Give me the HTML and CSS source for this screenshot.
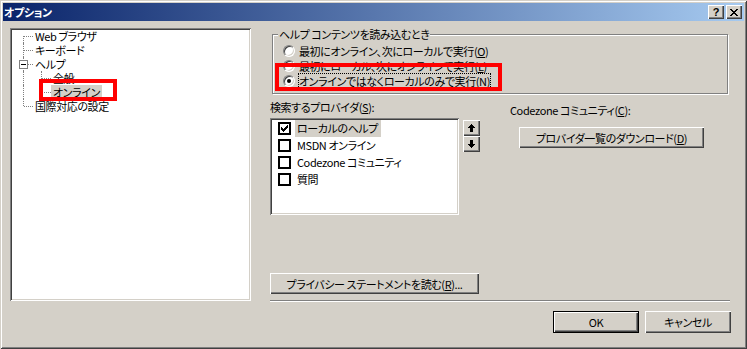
FILE: index.html
```html
<!DOCTYPE html>
<html lang="ja">
<head>
  <meta charset="UTF-8" />
  <title>オプション</title>
  <link rel="stylesheet" href="styles.css">
</head>
<body>
  <div class="window">
    <div class="titlebar">
      <span class="title">オプション</span>
      <div class="caption-buttons">
        <button class="cap-btn help">?</button>
        <button class="cap-btn">
          <svg width="8" height="7" viewBox="0 0 8 7" shape-rendering="crispEdges">
            <path d="M0 0h2v1h1v1h2V1h1V0h2v1H7v1H6v1H5v1h1v1h1v1h1v1H6V6H5V5H3v1H2v1H0V6h1V5h1V4h1V3H2V2H1V1H0z" fill="#000"/>
          </svg>
        </button>
      </div>
    </div>

    <div class="content">
      <div class="tree">
        <div class="node"><span class="cell first"></span><span class="label">Web ブラウザ</span></div>
        <div class="node"><span class="cell tee"></span><span class="label">キーボード</span></div>
        <div class="node"><span class="cell tee"><span class="expander"></span></span><span class="label">ヘルプ</span></div>
        <div class="node"><span class="cell pipe"></span><span class="cell tee"></span><span class="label">全般</span></div>
        <div class="node"><span class="cell pipe"></span><span class="cell last"></span><span class="label selected">オンライン</span></div>
        <div class="node"><span class="cell last"></span><span class="label">国際対応の設定</span></div>
      </div>

      <div class="pane">
        <fieldset class="group">
          <legend>ヘルプ コンテンツを読み込むとき</legend>
          <div class="radio-row"><span class="radio"></span><span class="radio-text">最初にオンライン、次にローカルで実行(<u>O</u>)</span></div>
          <div class="radio-row"><span class="radio"></span><span class="radio-text">最初にローカル、次にオンラインで実行(<u>L</u>)</span></div>
          <div class="radio-row"><span class="radio checked"></span><span class="radio-text focused">オンラインではなくローカルのみで実行(<u>N</u>)</span></div>
        </fieldset>

        <div class="providers">
          <div class="provider-col">
            <div class="field-label">検索するプロバイダ(<u>S</u>):</div>
            <div class="list-row">
              <div class="listbox">
                <div class="item">
                  <span class="check">
                    <svg width="7" height="7" viewBox="0 0 7 7" shape-rendering="crispEdges">
                      <path d="M6 0h1v3H6v1H5v1H4v1H3v1H2V6H1V5H0V2h1v1h1v1h1V3h1V2h1V1h1z" fill="#000"/>
                    </svg>
                  </span>
                  <span class="item-text selected">ローカルのヘルプ</span>
                </div>
                <div class="item"><span class="check"></span><span class="item-text">MSDN オンライン</span></div>
                <div class="item"><span class="check"></span><span class="item-text">Codezone コミュニティ</span></div>
                <div class="item"><span class="check"></span><span class="item-text">質問</span></div>
              </div>
              <div class="updown">
                <button class="btn arrow">
                  <svg width="7" height="8" viewBox="0 0 7 8" shape-rendering="crispEdges">
                    <path d="M3 0h1v1h1v1h1v1h1v1H5v4H2V4H0V3h1V2h1V1h1z" fill="#000"/>
                  </svg>
                </button>
                <button class="btn arrow">
                  <svg width="7" height="8" viewBox="0 0 7 8" shape-rendering="crispEdges">
                    <path d="M2 0h3v4h2v1H6v1H5v1H4v1H3V7H2V6H1V5H0V4h2z" fill="#000"/>
                  </svg>
                </button>
              </div>
            </div>
          </div>

          <div class="codezone">
            <div class="field-label">Codezone コミュニティ(<u>C</u>):</div>
            <button class="btn download">プロバイダ一覧のダウンロード(<u>D</u>)</button>
          </div>
        </div>

        <button class="btn privacy">プライバシー ステートメントを読む(<u>R</u>)...</button>
        <div class="separator"></div>
      </div>
    </div>

    <div class="footer">
      <button class="btn default">OK</button>
      <button class="btn">キャンセル</button>
    </div>

    <div class="mark mark-tree"></div>
    <div class="mark mark-radio"></div>
  </div>
</body>
</html>
```

FILE: styles.css
```css
body {
  margin: 0;
  font-family: "Noto Sans CJK JP", "Liberation Sans", sans-serif;
  font-feature-settings: "palt" 1;
  font-size: 11px;
  letter-spacing: -0.4px;
  line-height: 14px;
  color: #000;
  background: #d4d0c8;
}
button {
  font: inherit;
  letter-spacing: inherit;
  color: #000;
  margin: 0;
  padding: 0;
  border: none;
  background: #d4d0c8;
}
.window {
  position: relative;
  box-sizing: border-box;
  width: 747px;
  height: 349px;
  padding: 3px;
  background: #d4d0c8;
  box-shadow: inset 1px 1px #d4d0c8, inset -1px -1px #404040, inset 2px 2px #fff, inset -2px -2px #808080;
}

/* title bar */
.titlebar {
  display: flex;
  align-items: center;
  justify-content: space-between;
  height: 18px;
  padding: 0 2px 0 1px;
  background: linear-gradient(to right, #0a246a, #a6caf0);
}
.title {
  color: #fff;
  font-weight: bold;
}
.caption-buttons {
  display: flex;
  gap: 2px;
}
.cap-btn {
  display: flex;
  align-items: center;
  justify-content: center;
  width: 16px;
  height: 14px;
  box-shadow: inset 1px 1px #fff, inset -1px -1px #404040, inset -2px -2px #808080;
}
.cap-btn.help {
  font-family: "Liberation Sans", sans-serif;
  font-weight: bold;
  font-size: 11px;
  line-height: 14px;
}

/* main area */
.content {
  display: flex;
  gap: 19px;
  padding: 7px 0 0 7px;
}
.tree {
  box-sizing: border-box;
  width: 241px;
  height: 273px;
  padding: 1px 0 0 5px;
  background: #fff;
  box-shadow: inset 1px 1px #808080, inset -1px -1px #fff, inset 2px 2px #404040, inset -2px -2px #d4d0c8;
}
.node {
  display: flex;
  align-items: center;
  height: 14px;
}
.cell {
  position: relative;
  flex: none;
  width: 18px;
  height: 14px;
}
.cell::before {
  content: "";
  position: absolute;
  left: 8px;
  top: 0;
  bottom: 0;
  border-left: 1px dotted #808080;
}
.cell::after {
  content: "";
  position: absolute;
  left: 9px;
  top: 7px;
  width: 9px;
  border-top: 1px dotted #808080;
}
.cell.first::before { top: 7px; }
.cell.last::before { bottom: 7px; }
.cell.pipe::after { display: none; }
.expander {
  position: absolute;
  z-index: 1;
  left: 4px;
  top: 3px;
  box-sizing: border-box;
  width: 9px;
  height: 9px;
  border: 1px solid #808080;
  background: #fff;
}
.expander::before {
  content: "";
  position: absolute;
  left: 1px;
  top: 3px;
  width: 5px;
  height: 1px;
  background: #000;
}
.label {
  padding: 0 2px 0 2px;
  white-space: nowrap;
}
.label.selected {
  background: #d4d0c8;
}

.pane {
  display: flex;
  flex-direction: column;
  align-items: flex-start;
  width: 460px;
  margin-top: -1px;
}
.group {
  box-sizing: border-box;
  width: 456px;
  margin: 0 0 0 2px;
  padding: 2px 0 5px 5px;
  border: 1px solid #808080;
  box-shadow: 1px 1px #fff, inset 1px 1px #fff;
  min-width: 0;
}
.group legend {
  padding: 0 1px;
  background: #d4d0c8;
}
.radio-row {
  display: flex;
  align-items: center;
  gap: 4px;
  height: 15px;
  margin-left: 5px;
}
.radio {
  position: relative;
  box-sizing: border-box;
  width: 12px;
  height: 12px;
  border-radius: 50%;
  background: #fff;
  border: 1px solid;
  border-color: #808080 #fff #fff #808080;
  box-shadow: inset 1px 1px #404040, inset -1px -1px #d4d0c8;
}
.radio.checked::after {
  content: "";
  position: absolute;
  left: 3px;
  top: 3px;
  width: 4px;
  height: 4px;
  border-radius: 50%;
  background: #000;
}
.radio-text.focused {
  outline: 1px dotted #000;
  outline-offset: 0;
}

.providers {
  display: flex;
  margin-top: 6px;
}
.field-label {
  white-space: nowrap;
}
.provider-col .field-label {
  margin-bottom: 4px;
}
.list-row {
  display: flex;
  align-items: flex-start;
}
.listbox {
  box-sizing: border-box;
  width: 189px;
  height: 97px;
  padding: 2px 0 0 8px;
  background: #fff;
  box-shadow: inset 1px 1px #808080, inset -1px -1px #fff, inset 2px 2px #404040, inset -2px -2px #d4d0c8;
}
.item {
  display: flex;
  align-items: center;
  gap: 4px;
  height: 17px;
}
.check {
  display: flex;
  align-items: center;
  justify-content: center;
  box-sizing: border-box;
  width: 13px;
  height: 13px;
  border: 2px solid #000;
  background: #fff;
}
.item-text {
  padding: 1px 3px 2px 2px;
  white-space: nowrap;
}
.item-text.selected {
  background: #d4d0c8;
}
.updown {
  display: flex;
  flex-direction: column;
  margin: 2px 0 0 4px;
}
.btn {
  display: flex;
  align-items: center;
  justify-content: center;
  box-sizing: border-box;
  white-space: nowrap;
  box-shadow: inset 1px 1px #fff, inset -1px -1px #404040, inset -2px -2px #808080;
}
.btn.arrow {
  width: 17px;
  height: 16px;
}
.codezone {
  display: flex;
  flex-direction: column;
  align-items: flex-start;
  margin: 3px 0 0 30px;
}
.btn.download {
  width: 185px;
  height: 21px;
  margin: 10px 0 0 9px;
}
.btn.privacy {
  width: 209px;
  height: 21px;
  margin-top: 58px;
}
.separator {
  width: 460px;
  margin-top: 6px;
  border-top: 1px solid #808080;
  border-bottom: 1px solid #fff;
}

.footer {
  display: flex;
  justify-content: flex-end;
  gap: 6px;
  margin-top: 9px;
  padding-right: 13px;
}
.footer .btn {
  width: 86px;
  height: 22px;
}
.btn.default {
  border: 1px solid #000;
}

/* red annotation frames */
.mark {
  position: absolute;
  box-sizing: border-box;
  border: 4px solid #f00;
}
.mark-tree {
  left: 39px;
  top: 79px;
  width: 78px;
  height: 22px;
}
.mark-radio {
  left: 275px;
  top: 63px;
  width: 227px;
  height: 28px;
}
```
